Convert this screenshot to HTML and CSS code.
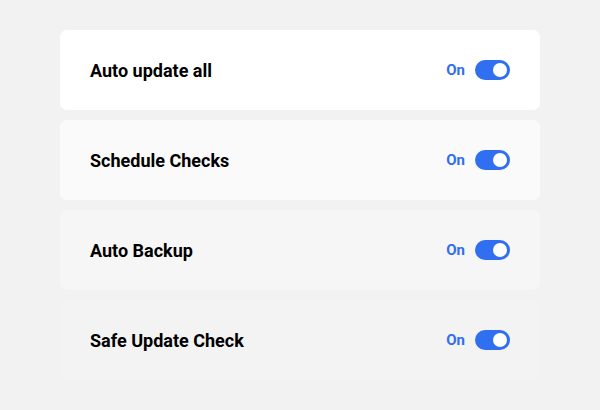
FILE: index.html
```html
<!DOCTYPE html>
<html>
<head>
<meta charset="utf-8">
<link rel="stylesheet" href="styles.css">
</head>
<body>
<div class="list">
  <div class="card c1"><span class="label">Auto update all</span><div class="ctrl"><span class="state">On</span><span class="toggle"><span class="knob"></span></span></div></div>
  <div class="card c2"><span class="label">Schedule Checks</span><div class="ctrl"><span class="state">On</span><span class="toggle"><span class="knob"></span></span></div></div>
  <div class="card c3"><span class="label">Auto Backup</span><div class="ctrl"><span class="state">On</span><span class="toggle"><span class="knob"></span></span></div></div>
  <div class="card c4"><span class="label">Safe Update Check</span><div class="ctrl"><span class="state">On</span><span class="toggle"><span class="knob"></span></span></div></div>
</div>
</body>
</html>
```
FILE: styles.css
```css
html, body { margin: 0; padding: 0; }
body {
  background: #f2f2f2;
  font-family: Roboto, "Liberation Sans", sans-serif;
  width: 600px;
  height: 410px;
}
.list {
  padding: 30px 60px;
  display: flex;
  flex-direction: column;
  gap: 10px;
}
.card {
  height: 80px;
  border-radius: 7px;
  display: flex;
  align-items: center;
  justify-content: space-between;
  padding: 0 30px;
}
.c1 { background: #ffffff; }
.c2 { background: #fafafa; }
.c3 { background: #f6f6f6; }
.c4 { background: #f3f3f3; }
.label {
  font-size: 18px;
  font-weight: 700;
  color: #000;
}
.ctrl {
  display: flex;
  align-items: center;
  gap: 10px;
}
.state {
  font-size: 15px;
  font-weight: 700;
  color: #2f6ff0;
}
.toggle {
  width: 35px;
  height: 20px;
  border-radius: 10px;
  background: #2f6ff0;
  display: flex;
  align-items: center;
  justify-content: flex-end;
  padding: 0 3px;
  box-sizing: border-box;
}
.knob {
  width: 14px;
  height: 14px;
  border-radius: 50%;
  background: #fff;
}
```
